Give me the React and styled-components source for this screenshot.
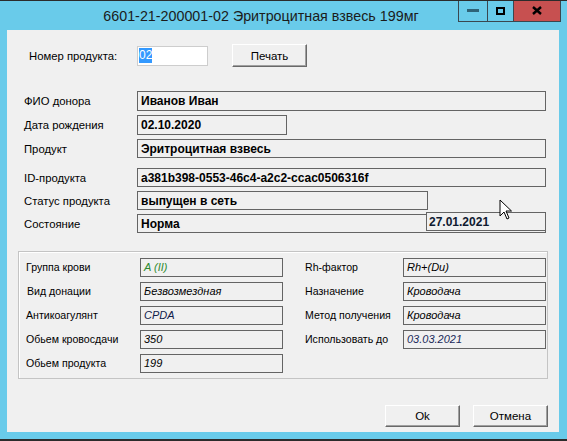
import React from 'react';
import styled, {createGlobalStyle} from 'styled-components';

const GlobalStyle = createGlobalStyle`
  html, body {
    margin: 0;
    padding: 0;
    background: #69cbea;
  }
  body {
    font-family: "Liberation Sans", Arial, sans-serif;
  }
`;

const Window = styled.div`
  position: relative;
  width: 567px;
  height: 441px;
  box-sizing: border-box;
  background: #69cbea;
  border-top: 1px solid #2b2b2b;
  border-bottom: 2px solid #2b2b2b;
  display: flex;
  flex-direction: column;
  overflow: hidden;
`;

const TitleBar = styled.div`
  height: 29px;
  display: flex;
  align-items: flex-start;
  flex-shrink: 0;
`;

const Title = styled.div`
  flex: 1;
  height: 29px;
  display: flex;
  align-items: center;
  justify-content: center;
  padding-left: 64px;
  font-size: 14.3px;
  color: #1b1b1b;
  white-space: nowrap;
`;

const Controls = styled.div`
  display: flex;
  margin-right: 6px;
  margin-top: -1px;
  border: 1px solid #3a4750;
  border-top: none;
`;

const CtrlButton = styled.div`
  width: ${p => p.$w}px;
  height: 21px;
  display: flex;
  align-items: center;
  justify-content: center;
  background: ${p => (p.$close ? '#c75050' : 'transparent')};
  border-left: ${p => (p.$first ? 'none' : '1px solid #3a4750')};
`;

const Client = styled.div`
  margin-left: 7px;
  width: 552px;
  height: 402px;
  flex-shrink: 0;
  box-sizing: border-box;
  background: #f0f0f0;
  display: flex;
  flex-direction: column;
`;

const TopRow = styled.div`
  display: flex;
  align-items: center;
  margin-top: 14px;
  padding-left: 22px;
  height: 23px;
`;

const TopLabel = styled.div`
  width: 108px;
  font-size: 11.3px;
  color: #000;
`;

const NumberInput = styled.div`
  width: 71px;
  height: 20px;
  box-sizing: border-box;
  background: #fff;
  border: 1px solid #cdcdcd;
  display: flex;
  align-items: center;
  padding-left: 1px;
  font-size: 12px;
`;

const Selected = styled.span`
  background: #3399ff;
  color: #fff;
  line-height: 15px;
`;

const Button = styled.div`
  width: 75px;
  height: ${p => p.$h || 22}px;
  box-sizing: border-box;
  margin-left: ${p => p.$ml || 0}px;
  background: #f0f0f0;
  border: 1px solid;
  border-color: #ffffff #696969 #696969 #ffffff;
  box-shadow: inset -1px -1px 0 #a0a0a0;
  display: flex;
  align-items: center;
  justify-content: center;
  font-size: 11.5px;
  color: #000;
`;

const MainGrid = styled.div`
  display: grid;
  grid-template-columns: 113px 409px;
  row-gap: 4px;
  margin-top: 24px;
  padding-left: 17px;
  align-items: center;
`;

const Label = styled.div`
  font-size: 11.3px;
  color: #000;
  white-space: nowrap;
  margin-top: ${p => p.$mt || 0}px;
`;

const Field = styled.div`
  position: relative;
  width: ${p => p.$w || 409}px;
  height: ${p => p.$h || 20}px;
  margin-top: ${p => p.$mt || 0}px;
  box-sizing: border-box;
  border: 1px solid #646464;
  background: #f0f0f0;
  padding: 1px 3px 0;
  font-size: 12px;
  font-weight: bold;
  line-height: 16px;
  color: #000;
  white-space: nowrap;
  overflow: visible;
`;

const DateOverlay = styled.div`
  position: absolute;
  left: 288px;
  top: -3px;
  width: 120px;
  height: 19px;
  box-sizing: border-box;
  border: 1px solid #646464;
  background: #f0f0f0;
  padding: 1px 2px 0;
  font-size: 12px;
  font-weight: bold;
  line-height: 16px;
  color: #0f1a30;
`;

const GroupBox = styled.div`
  margin: 18px 0 0 11px;
  width: 530px;
  height: 128px;
  box-sizing: border-box;
  border: 1px solid #c4c4c4;
  box-shadow: inset 1px 1px 0 #ffffff;
  padding: 6px 0 0 7px;
  display: flex;
  gap: 22px;
`;

const GroupColumn = styled.div`
  display: grid;
  grid-template-columns: ${p => p.$labelW}px 143px;
  grid-auto-rows: 19px;
  row-gap: 5px;
  align-items: center;
  align-content: start;
`;

const SmallLabel = styled.div`
  font-size: 10.6px;
  color: #000;
  white-space: nowrap;
  padding-left: ${p => p.$pl || 0}px;
  margin-top: -2px;
`;

const Value = styled.div`
  width: 143px;
  height: 19px;
  box-sizing: border-box;
  border: 1px solid #646464;
  background: #f0f0f0;
  padding: 0 3px;
  font-size: 11px;
  font-style: italic;
  line-height: 16px;
  color: ${p => p.$color || '#000'};
  white-space: nowrap;
`;

const Footer = styled.div`
  display: flex;
  justify-content: flex-end;
  gap: 13px;
  margin-top: 26px;
  padding-right: 11px;
`;

const Cursor = styled.svg`
  position: absolute;
  left: 499px;
  top: 198px;
`;

const leftGroup = [
  ['Группа крови', 'A (II)', '#2f8a2f'],
  ['Вид донации', 'Безвозмездная', '#000', 1],
  ['Антикоагулянт', 'CPDA', '#10204a'],
  ['Обьем кровосдачи', '350', '#000'],
  ['Обьем продукта', '199', '#000'],
];

const rightGroup = [
  ['Rh-фактор', 'Rh+(Du)'],
  ['Назначение', 'Кроводача'],
  ['Метод получения', 'Кроводача'],
  ['Использовать до', '03.03.2021', '#1a2a5a'],
];

export default function App() {
  return (
    <>
      <GlobalStyle/>
      <Window>
        <TitleBar>
          <Title>6601-21-200001-02 Эритроцитная взвесь 199мг</Title>
          <Controls>
            <CtrlButton $w={28} $first>
              <svg width="12" height="3"><rect width="12" height="3" fill="#2e6378"/></svg>
            </CtrlButton>
            <CtrlButton $w={25}>
              <svg width="9" height="8"><rect x="1" y="1" width="7" height="6" fill="none" stroke="#000" strokeWidth="2"/></svg>
            </CtrlButton>
            <CtrlButton $w={46} $close>
              <svg width="10" height="9"><path d="M1 1 L9 8 M9 1 L1 8" stroke="#000" strokeWidth="2.4"/></svg>
            </CtrlButton>
          </Controls>
        </TitleBar>
        <Client>
          <TopRow>
            <TopLabel>Номер продукта:</TopLabel>
            <NumberInput><Selected>02</Selected></NumberInput>
            <Button $h={23} $ml={24}>Печать</Button>
          </TopRow>
          <MainGrid>
            <Label>ФИО донора</Label>
            <Field>Иванов Иван</Field>
            <Label>Дата рождения</Label>
            <Field $w={150}>02.10.2020</Field>
            <Label>Продукт</Label>
            <Field $h={19}>Эритроцитная взвесь</Field>
            <Label $mt={6}>ID-продукта</Label>
            <Field $h={19} $mt={6}>a381b398-0553-46c4-a2c2-ccac0506316f</Field>
            <Label>Статус продукта</Label>
            <Field $w={291} $h={19}>выпущен в сеть</Field>
            <Label>Состояние</Label>
            <Field $h={19}>
              Норма
              <DateOverlay>27.01.2021</DateOverlay>
            </Field>
          </MainGrid>
          <GroupBox>
            <GroupColumn $labelW={114}>
              {leftGroup.map(([l, v, c, pl]) => (
                <React.Fragment key={l}>
                  <SmallLabel $pl={pl}>{l}</SmallLabel>
                  <Value $color={c}>{v}</Value>
                </React.Fragment>
              ))}
            </GroupColumn>
            <GroupColumn $labelW={98}>
              {rightGroup.map(([l, v, c]) => (
                <React.Fragment key={l}>
                  <SmallLabel>{l}</SmallLabel>
                  <Value $color={c}>{v}</Value>
                </React.Fragment>
              ))}
            </GroupColumn>
          </GroupBox>
          <Footer>
            <Button>Ok</Button>
            <Button>Отмена</Button>
          </Footer>
        </Client>
        <Cursor width="14" height="22" viewBox="0 0 14 22">
          <path d="M1 1 L1 17 L5 13 L8 20 L10 19 L7 12 L12.5 12 Z" fill="#fff" stroke="#000" strokeWidth="1" strokeLinejoin="round"/>
        </Cursor>
      </Window>
    </>
  );
}
